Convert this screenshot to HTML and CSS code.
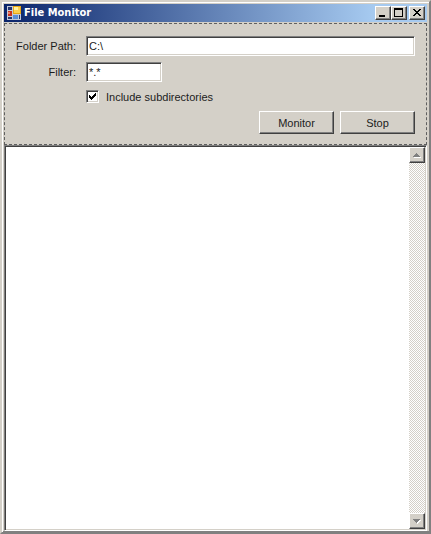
FILE: index.html
```html
<!DOCTYPE html>
<html lang="en">
<head>
<meta charset="UTF-8">
<meta name="viewport" content="width=device-width, initial-scale=1.0">
<title>File Monitor</title>
<link rel="stylesheet" href="styles.css">
</head>
<body>
<div class="window">
  <header class="titlebar">
    <svg class="app-icon" width="14" height="14" viewBox="0 0 14 14" shape-rendering="crispEdges" aria-hidden="true">
      <rect x="0" y="0" width="14" height="14" fill="#c3c9d8"/>
      <rect x="1" y="1" width="4" height="3" fill="#26366f"/>
      <rect x="1" y="5" width="4" height="5" fill="#c8321e"/>
      <rect x="1" y="6" width="2" height="2" fill="#e8806a"/>
      <rect x="1" y="11" width="4" height="2" fill="#26366f"/>
      <rect x="6" y="0" width="8" height="8" fill="#e8a818"/>
      <rect x="7" y="1" width="6" height="6" fill="#fcd050"/>
      <rect x="7" y="1" width="4" height="3" fill="#fff0a0"/>
      <rect x="6" y="9" width="5" height="4" fill="#5b8fd8"/>
      <rect x="12" y="9" width="1" height="4" fill="#26366f"/>
    </svg>
    <h1>File Monitor</h1>
    <div class="title-buttons">
      <button class="title-btn" type="button" aria-label="Minimize">
        <svg width="12" height="10" viewBox="0 0 12 10" shape-rendering="crispEdges"><rect x="2" y="7" width="6" height="2"/></svg>
      </button>
      <button class="title-btn" type="button" aria-label="Maximize">
        <svg width="12" height="10" viewBox="0 0 12 10" shape-rendering="crispEdges"><path fill-rule="evenodd" d="M1 0h9v9H1zM2 2v6h7V2z"/></svg>
      </button>
      <button class="title-btn close-btn" type="button" aria-label="Close">
        <svg width="12" height="10" viewBox="0 0 12 10" shape-rendering="crispEdges"><path d="M2 1h2v1h1v1h2V2h1V1h2v1H9v1H8v1H7v1h1v1h1v1h1v1H8V7H7V6H5v1H4v1H2V7h1V6h1V5h1V4H4V3H3V2H2z"/></svg>
      </button>
    </div>
  </header>
  <form class="settings">
    <label class="field-label" for="folder">Folder Path:</label>
    <input class="text-box" id="folder" type="text" value="C:\">
    <label class="field-label" for="filter">Filter:</label>
    <input class="text-box filter-box" id="filter" type="text" value="*.*">
    <div class="check-row">
      <input class="check" id="subdirs" type="checkbox" checked>
      <label for="subdirs">Include subdirectories</label>
    </div>
    <div class="actions">
      <button class="btn" type="button">Monitor</button>
      <button class="btn" type="button">Stop</button>
    </div>
  </form>
  <main class="log">
    <textarea class="log-text" aria-label="Log" readonly></textarea>
    <div class="scrollbar">
      <button class="scroll-btn" type="button" aria-label="Scroll up" disabled>
        <svg width="12" height="12" viewBox="0 0 12 12" shape-rendering="crispEdges"><path fill="#fff" d="M6 5h1v1h1v1h1v1h1v1H3V8h1V7h1V6h1z"/><path fill="#808080" d="M5 4h1v1h1v1h1v1h1v1H2V7h1V6h1V5h1z"/></svg>
      </button>
      <button class="scroll-btn" type="button" aria-label="Scroll down" disabled>
        <svg width="12" height="12" viewBox="0 0 12 12" shape-rendering="crispEdges"><path fill="#fff" d="M3 5h7v1H9v1H8v1H7v1H6V8H5V7H4V6H3z"/><path fill="#808080" d="M2 4h7v1H8v1H7v1H6v1H5V7H4V6H3V5H2z"/></svg>
      </button>
    </div>
  </main>
</div>
</body>
</html>
```

FILE: styles.css
```css
* { box-sizing:border-box; }
body { margin:0; background:#d4d0c8; color:#1c1c1c; font:11px/16px 'Liberation Sans',Arial,sans-serif; }
input, button, textarea { font:inherit; color:inherit; margin:0; padding:0; border-radius:0; outline:none; }
svg { display:block; }

/* Window frame */
.window { display:flex; flex-direction:column; min-height:100vh; padding:2px 2px 1px; background:#d4d0c8; border:2px solid; border-color:#d4d0c8 #808080 #808080 #d4d0c8; box-shadow:inset 1px 1px #fff, inset 0 -1px #808080; }
.titlebar { display:flex; align-items:center; height:18px; margin-bottom:1px; padding:0 2px 0 3px; background:linear-gradient(to right,#0a246a,#a6caf0 calc(100% - 54px)); }
h1 { flex:1; margin:0 0 0 3px; color:#fff; font:bold 11px/18px 'DejaVu Sans Condensed','DejaVu Sans',sans-serif; }
.title-buttons { display:flex; }
.title-btn, .btn, .scroll-btn { background:#d4d0c8; border:1px solid; border-color:#fff #404040 #404040 #fff; box-shadow:inset -1px -1px #808080; }
.title-btn { width:16px; height:14px; padding:1px; }
.close-btn { margin-left:2px; }

/* Settings panel */
.settings { display:grid; grid-template-columns:71px 1fr; column-gap:10px; row-gap:6px; padding:12px 11px 10px 0; border:1px dashed #606060; }
.field-label { text-align:right; line-height:20px; }
.text-box { width:100%; height:20px; padding:0 2px; background:#fff; border:1px solid; border-color:#808080 #fff #fff #808080; box-shadow:inset 1px 1px #404040, inset -1px -1px #d4d0c8; }
.filter-box { width:76px; }
.check-row { grid-column:2; display:flex; align-items:center; gap:7px; height:17px; }
.check { appearance:none; width:13px; height:13px; background:#fff; border:1px solid; border-color:#808080 #fff #fff #808080; box-shadow:inset 1px 1px #404040, inset -1px -1px #d4d0c8; }
.check:checked { background:#fff url("data:image/svg+xml,%3Csvg xmlns='http://www.w3.org/2000/svg' width='11' height='11' shape-rendering='crispEdges'%3E%3Cpath d='M2 4h1v1h1v1h1V5h1V4h1V3h1V2h1v3H8v1H7v1H6v1H5v1H4V8H3V7H2z'/%3E%3C/svg%3E") no-repeat; }
.actions { grid-column:1 / -1; display:flex; justify-content:flex-end; gap:6px; }
.btn { width:75px; height:23px; }

/* Log output */
.log { flex:1; display:flex; background:#fff; border:1px solid; border-color:#808080 #fff #fff #808080; box-shadow:inset 1px 1px #404040, inset -1px -1px #d4d0c8; padding:1px; }
.log-text { flex:1; min-width:0; border:none; background:#fff; resize:none; }
.scrollbar { display:flex; flex-direction:column; justify-content:space-between; width:16px; background:repeating-conic-gradient(#fff 0 25%,#d4d0c8 0 50%) 0 0 / 2px 2px; }
.scroll-btn { width:16px; height:16px; padding:1px; }
```
